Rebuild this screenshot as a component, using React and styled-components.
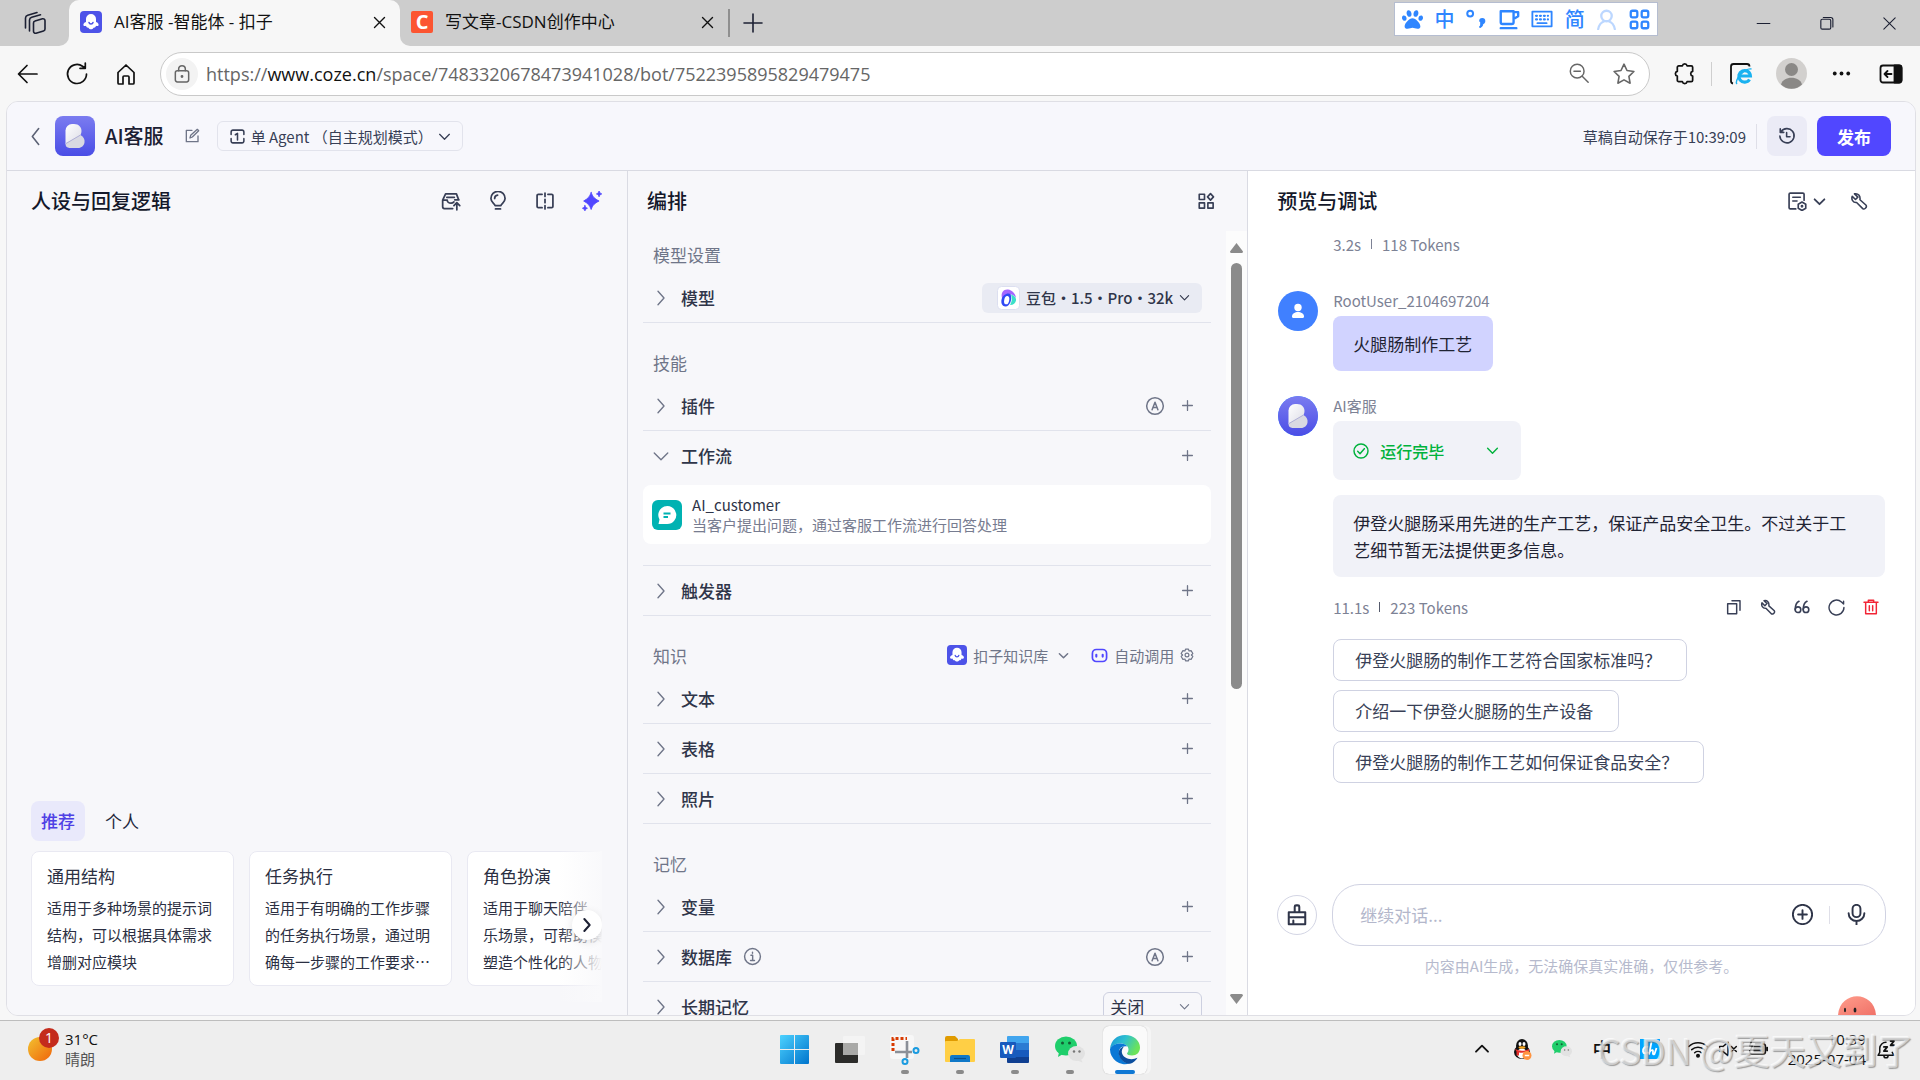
import styled, { createGlobalStyle } from "styled-components";
import { FaPaw } from "react-icons/fa";

const GlobalStyle = createGlobalStyle`
    * {
        box-sizing: border-box;
    }
    body {
        margin: 0;
        font-family: "Noto Sans CJK SC", "Noto Sans", sans-serif;
        color: #1c2033;
        background-color: #f7f7f7;
    }
    button, input, select {
        font-family: inherit;
        font-size: inherit;
        padding: 0;
        border: none;
        background: none;
        color: inherit;
    }
    button {
        cursor: pointer;
        display: flex;
        align-items: center;
        justify-content: center;
    }
    h1, h2, h3, p {
        margin: 0;
    }
    svg {
        display: block;
        flex: none;
    }
`;

/* ---------- icons ---------- */

const shapes = {
    back: <path d="M21 12H3M11 3.500L2.500 12l8.500 8.500" />,
    reload: <path d="M21.500 12a9.500 9.500 0 1 1-4-7.750L20 6M20.300 1v5.300H15" />,
    home: <path d="M4 10.500L12 3l8 7.500V21a1 1 0 0 1-1 1h-4v-7a1 1 0 0 0-1-1h-4a1 1 0 0 0-1 1v7H5a1 1 0 0 1-1-1z" />,
    lock: <><rect x="4" y="8" width="16" height="13.500" rx="2.500" /><path d="M8 8V6a4 4 0 0 1 8 0v2" /><circle cx="12" cy="15" r=".8" fill="currentColor" /></>,
    zoomOut: <><circle cx="10" cy="10" r="7.500" /><path d="M15.500 15.500L22 22M6.500 10h7" /></>,
    star: <path d="M12 2.200l3 6.300 6.900 1-5 4.800 1.200 6.900-6.100-3.300-6.100 3.300 1.200-6.900-5-4.800 6.900-1z" />,
    puzzle: <path d="M6 4h3.800a2.500 2.500 0 0 1 4.900 0H19a1.500 1.500 0 0 1 1.500 1.500v4.300a2.500 2.500 0 0 0 0 4.900V19a1.500 1.500 0 0 1-1.500 1.500h-4.300a2.500 2.500 0 0 1-4.900 0H6A1.500 1.500 0 0 1 4.500 19v-4.300a2.500 2.500 0 0 1 0-4.900V5.500A1.500 1.500 0 0 1 6 4z" />,
    close: <path d="M4 4l16 16M20 4L4 20" />,
    minus: <path d="M3 12h18" />,
    restore: <><rect x="4" y="6" width="14" height="14" rx="2" /><path d="M7.500 3.500H18a3 3 0 0 1 3 3V17" /></>,
    plus: <path d="M12 3v18M3 12h18" />,
    windows: <><path d="M10.500 12a2 2 0 0 1 1.500-2l7.500-2.200a2 2 0 0 1 2.500 2V18a2 2 0 0 1-1.500 2L13 22.200a2 2 0 0 1-2.500-2z" /><path d="M6.500 20V9a3 3 0 0 1 2.200-2.800L17.500 3.700M2.500 17V7a3 3 0 0 1 2.200-2.800L14 1.500" /></>,
    left: <path d="M16 2L8 12l8 10" />,
    right: <path d="M8 3l8 9-8 9" />,
    down: <path d="M3 8l9 9 9-9" />,
    up: <path d="M3 16l9-9 9 9" />,
    edit: <path d="M21 12v8.500H3.500V3.500H12M9 15l1-4L20 2l2 2-9.500 9.500z" />,
    agent: <path d="M9 3H5.500A2.500 2.500 0 0 0 3 5.500V9M3 15v3.500A2.500 2.500 0 0 0 5.500 21h13a2.500 2.500 0 0 0 2.500-2.500V15M15 3h3.500A2.500 2.500 0 0 1 21 5.500V9M9 9.500l3-2V17M9 3h6" />,
    history: <path d="M4 6.500A9.500 9.500 0 1 1 2.500 12M3 2.500v4.700h4.700M11.500 7.500V13H16" />,
    library: <path d="M21 10L18.500 3.500h-13L2 11v8a2 2 0 0 0 2 2h10M2 11h5.500c0 2 2 3.500 4.500 3.500M21.500 10.500h-5M7 7.500h9M12 14.500c1.500 0 2.500-.4 3.500-1.500M19 22.500V14M15.500 17.500L19 14l3.500 3.500" />,
    bulb: <path d="M8.500 17.500C8 15 3.500 13.500 3.500 9a8.500 8.500 0 0 1 17 0c0 4.500-4.500 6-5 8.500zM9 21.500h6M8 9a4 4 0 0 1 3.500-4" />,
    split: <path d="M8.500 4H4a1.500 1.500 0 0 0-1.500 1.500v13A1.500 1.500 0 0 0 4 20h4.500M15.500 4H20a1.500 1.500 0 0 1 1.500 1.500v13A1.500 1.500 0 0 1 20 20h-4.500M12 2.500v4M12 10v4M12 17.500v4" />,
    sparkle: <path d="M11 1.800c1.800 5.200 3.800 7.200 9.500 10.200-5.700 3-7.700 5-9.500 10.200-1.800-5.200-3.800-7.200-9-10.200 5.200-3 7.200-5 9-10.200zM20.500 0c.6 2 1.200 2.700 3.200 3.500-2 .8-2.600 1.500-3.200 3.500-.6-2-1.200-2.700-3.200-3.500 2-.8 2.600-1.500 3.200-3.500zM3.500 17.500c.6 1.800 1.200 2.500 3 3.200-1.800.7-2.400 1.300-3 3.100-.6-1.800-1.200-2.400-3-3.100 1.800-.7 2.400-1.400 3-3.200z" fill="currentColor" strokeWidth="1" />,
    blocks: <><rect x="3" y="3" width="7" height="7" /><rect x="3" y="14.500" width="7" height="7" /><rect x="14.500" y="14.500" width="7" height="7" /><path d="M18 2.200l4 4.300-4 4.300-4-4.300z" /></>,
    note: <><path d="M10.500 21.500H4A1.500 1.500 0 0 1 2.500 20V4A1.500 1.500 0 0 1 4 2.500h15A1.500 1.500 0 0 1 20.500 4v7M7 7.500h9M7 12h5" /><path d="M18 13.200l4.500 2.600v5L18 23.400l-4.500-2.600v-5z" /><circle cx="18" cy="18.300" r=".7" fill="currentColor" /></>,
    wrench: <path d="M6 2.500l4.500 4.300-3.200 3.200L3 5.800c-1.500 3.700.8 8.700 5.800 8.200l8.200 8.200c2 1.500 6-1.500 4.500-4.500l-8.200-7.400C14 5 11 1.500 6 2.500z" />,
    circleA: <><circle cx="12" cy="12" r="10" /><path d="M8.500 16.500L12 7.500l3.500 9M9.700 13.800h4.600" /></>,
    info: <><circle cx="12" cy="12" r="10" /><path d="M10 10.500h2.200V17M9.500 17h5M12 6.600v1.200" /></>,
    robot: <><rect x="2" y="3.500" width="20" height="17" rx="5.500" /><path d="M7.500 11v2.500M16.500 11v2.500" strokeWidth="3" /></>,
    gear: <><path d="M9.500 2h5l1 3.200L19 4.500l3 5L19.500 12l2.500 2.500-3 5-3.500-.7-1 3.200h-5l-1-3.200-3.500.7-3-5L4.500 12 2 9.500l3-5 3.500.7z" /><circle cx="12" cy="12" r="3.300" /></>,
    check: <><circle cx="12" cy="12" r="10.500" /><path d="M7 12.500l3.500 3.500L17 8.500" /></>,
    copy: <><rect x="2.500" y="7" width="13.500" height="15" /><path d="M9 2.500h12V17" /></>,
    quote: <><circle cx="6" cy="16" r="4.200" /><circle cx="18" cy="16" r="4.200" /><path d="M7.500 3.500C3.500 5.500 1.800 9 1.800 16M19.500 3.500c-4 2-5.700 5.500-5.700 12.500" /></>,
    redo: <path d="M22.500 12A10.500 10.500 0 1 1 19 4.200L22 7M22 3v4" />,
    trash: <path d="M1.500 5h21M8 4.500V2h8v2.500M4 5.500V22h16V5.500M9.500 10v7.500M14.500 10v7.500" />,
    broom: <path d="M9.500 9V3A1.500 1.500 0 0 1 11 1.500h2A1.500 1.500 0 0 1 14.500 3v6H21v13H3V9zM3 14.500h18M8 22v-4M9.500 9h5" />,
    addCircle: <><circle cx="12" cy="12" r="11" /><path d="M12 7v10M7 12h10" /></>,
    mic: <><rect x="7.500" y="1" width="9" height="14" rx="4.500" /><path d="M3 10.500a9 9 0 0 0 18 0M12 19.500v4" /></>,
    sidebar: <><rect x="1.500" y="3.500" width="21" height="17" rx="2.500" /><path d="M15.500 3.500H20a2.500 2.500 0 0 1 2.500 2.500v12a2.500 2.500 0 0 1-2.500 2.500h-4.500z" fill="currentColor" /><path d="M12.500 12H5.500M8.500 9l-3 3 3 3" /></>,
    dots: <g fill="currentColor" stroke="none"><circle cx="3.500" cy="12" r="2.400" /><circle cx="12" cy="12" r="2.400" /><circle cx="20.500" cy="12" r="2.400" /></g>,
    cup: <path d="M3 3.500h14v12a2 2 0 0 1-2 2H5a2 2 0 0 1-2-2zM17 4.500h5v4.500l-5 3M3 22h17" />,
    keyboard: <><rect x="1.500" y="4" width="21" height="16" /><path d="M5.500 8.500h13M5.500 12.500h13" strokeDasharray="1 3.300" strokeWidth="2.400" /><path d="M7 16.500h10" /></>,
    person: <><circle cx="12" cy="8" r="6" /><path d="M2.500 23c1-5 3.500-8 7-9M21.500 23c-1-5-3.500-8-7-9" /></>,
    apps: <><rect x="2" y="2" width="7.500" height="7.500" rx="2" /><rect x="14.500" y="2" width="7.500" height="7.500" rx="2" /><rect x="2" y="14.500" width="7.500" height="7.500" rx="2" /><rect x="14.500" y="14.500" width="7.500" height="7.500" rx="2" /></>,
    punct: <><circle cx="5" cy="5.500" r="3.500" /><path d="M17 14.500a2.500 2.500 0 1 1 2.500 2.500c.5 2-1 3.500-2.500 4.500" fill="currentColor" /></>,
    wifi: <><path d="M1 9a16 16 0 0 1 22 0M4.500 12.800a11 11 0 0 1 15 0M8 16.500a6 6 0 0 1 8 0" /><circle cx="12" cy="20" r="1.500" fill="currentColor" /></>,
    mute: <path d="M2 9v6h4l6 5V4L6 9zM16 9l6 6M22 9l-6 6" />,
    battery: <><path d="M9 6h9a3 3 0 0 1 3 3v6a3 3 0 0 1-3 3H5a3 3 0 0 1-3-3v-1M4.500 2L2 8h3.500L3.500 12" /><rect x="7.500" y="9" width="10" height="6" fill="currentColor" /><path d="M23 10.500v3" strokeWidth="2.500" /></>,
    bell: <><path d="M12 4A7.500 7.500 0 0 0 4.500 11v5L2.500 19.500h19L19.500 16M9.500 20a2.500 2.500 0 0 0 5 0" /><path d="M9.500 9.500h4l-4 5h4M17.500 2.500h4l-4 5h4" strokeWidth="2.200" /></>,
};

const Icon = ({ name, size = 20, weight = 2, color }) => (
    <svg
        width={size}
        height={size}
        viewBox="0 0 24 24"
        fill="none"
        stroke="currentColor"
        strokeWidth={weight}
        strokeLinecap="round"
        strokeLinejoin="round"
        color={color}
        aria-hidden="true"
    >
        {shapes[name]}
    </svg>
);

const CozeLogo = ({ size = 22 }) => (
    <svg width={size} height={size} viewBox="0 0 22 22">
        <rect width="22" height="22" rx="4" fill="#4d53e8" />
        <path d="M11 3a5 5 0 0 1 5 5v3c2 .5 3 2 2.500 3.500-.8.800-1.800.5-2.500.3-.5 1.700-1.500 2.200-2.500 1.900-1 2-4 2-5 0-1 .3-2-.2-2.500-1.900-.7.200-1.700.5-2.500-.3C3 13 4 11.500 6 11V8a5 5 0 0 1 5-5z" fill="#fff" />
        <path d="M9 11.500c.5 2 3.500 2 4 0" fill="none" stroke="#4d53e8" strokeWidth="1.500" strokeLinecap="round" />
    </svg>
);

const BotLogo = ({ round }) => (
    <svg width="40" height="40" viewBox="0 0 40 40">
        <defs>
            <linearGradient id="botBg" x1="0" y1="0" x2="0" y2="1">
                <stop offset="0" stopColor="#7b7cf0" />
                <stop offset="1" stopColor="#4a4de6" />
            </linearGradient>
            <linearGradient id="botFace" x1="0" y1="0" x2="1" y2="1">
                <stop offset="0" stopColor="#fff" />
                <stop offset="1" stopColor="#dcdce6" />
            </linearGradient>
        </defs>
        <rect width="40" height="40" rx={round ? 20 : 8} fill="url(#botBg)" />
        <path d="M10.500 28V14.500a6.500 6.500 0 0 1 6.500-6.500h2c5 0 7.500 3.500 7.500 7 0 2.500-1 4-3 5.500z" fill="url(#botFace)" />
        <path d="M10.500 27.500L25.500 19c3 1.500 4.500 4.500 4 7.500-.5 3-3 5.500-6.500 5.500h-8.500a4.300 4.300 0 0 1-4-4.500z" fill="#d9d9e2" />
        <path d="M11 27.500L25 19.300" stroke="#b0b0d6" strokeWidth="1" />
    </svg>
);

const IeLogo = () => (
    <svg width="24" height="24" viewBox="0 0 24 24" fill="none">
        <path d="M4 21.500A2.500 2.500 0 0 1 2 19V4.500a2.500 2.500 0 0 1 2.500-2.500H18a2.500 2.500 0 0 1 2.500 2.500" stroke="#111" strokeWidth="1.800" />
        <path d="M20.500 17.500a5.800 5.800 0 1 1 .9-3.500H10.500" stroke="#1ab2f0" strokeWidth="3.200" />
        <path d="M8 22C5 19 15.500 5.500 22.500 7" stroke="#1ab2f0" strokeWidth="1.400" />
    </svg>
);

const UserAvatar = () => (
    <svg width="31" height="31" viewBox="0 0 31 31">
        <circle cx="15.500" cy="15.500" r="15.500" fill="#d2d0ce" />
        <circle cx="15.500" cy="11.500" r="6.500" fill="#8a8886" />
        <path d="M5 26.500c2-9 19-9 21 0a15 15 0 0 1-21 0z" fill="#8a8886" />
    </svg>
);

const WeChatLogo = ({ size = 30 }) => (
    <svg width={size} height={size} viewBox="0 0 30 30">
        <ellipse cx="11" cy="11" rx="11" ry="9.500" fill="#1fce6b" />
        <path d="M4 17l-1 5 5-3z" fill="#1fce6b" />
        <ellipse cx="21.500" cy="18.500" rx="8.500" ry="7.500" fill="#e2e2e2" />
        <path d="M26 24l1.500 3.500-5-2z" fill="#e2e2e2" />
        <circle cx="7.500" cy="8" r="1.500" fill="#155c34" />
        <circle cx="14.500" cy="8" r="1.500" fill="#155c34" />
        <circle cx="19" cy="16.500" r="1.200" fill="#777" />
        <circle cx="24.500" cy="16.500" r="1.200" fill="#777" />
    </svg>
);

/* ---------- browser chrome ---------- */

const Screen = styled.div`
    height: 100vh;
    min-width: 1280px;
    display: flex;
    flex-direction: column;
    overflow: hidden;
    position: relative;
`;

const TabBar = styled.div`
    height: 46px;
    flex: none;
    display: flex;
    align-items: center;
    background-color: #cdcdcd;
    position: relative;
`;

const TabActions = styled.button`
    width: 69px;
    height: 46px;
    background-color: #cdcdcd;
    border-bottom-right-radius: 10px;
`;

const TabCorner = styled.div`
    align-self: stretch;
    background-color: #f7f7f7;
`;

const Tab = styled.div`
    width: ${(props) => (props.$active ? "331px" : "328px")};
    height: 46px;
    padding: 0 13px 2px 11px;
    display: flex;
    align-items: center;
    gap: 12px;
    background-color: ${(props) => (props.$active ? "#f7f7f7" : "#cdcdcd")};
    border-radius: ${(props) => (props.$active ? "10px 10px 0 0" : "0 0 0 10px")};
    font: 17px/24px "Open Sans", "Noto Sans CJK SC", sans-serif;
    color: #111;
`;

const TabTitle = styled.span`
    flex: 1;
    white-space: nowrap;
`;

const CsdnLogo = styled.span`
    width: 22px;
    height: 22px;
    border-radius: 2px;
    background-color: #fc5531;
    color: white;
    font: bold 20px/22px "Open Sans", sans-serif;
    text-align: center;
`;

const NewTab = styled.button`
    height: 28px;
    width: 48px;
    border-left: 2px solid #8f8f8f;
`;

const WindowControls = styled.div`
    margin-left: auto;
    display: flex;
    gap: 46px;
    padding-right: 22px;
`;

const ImeBar = styled.div`
    position: absolute;
    top: 2px;
    right: 262px;
    width: 264px;
    height: 34px;
    padding: 0 7px;
    display: flex;
    align-items: center;
    justify-content: space-between;
    background-color: white;
    border: 1px solid #b5bdd0;
    color: #2f86ff;
    font-size: 20px;
    font-weight: 500;
    line-height: 30px;
`;

const AddressRow = styled.div`
    height: 55px;
    flex: none;
    display: flex;
    align-items: center;
    padding: 0 4px 0 16px;
    background-color: #f7f7f7;
    color: #111;
`;

const NavButtons = styled.div`
    display: flex;
    gap: 25px;
    padding-right: 22px;
`;

const AddressField = styled.div`
    flex: 1;
    height: 44px;
    padding: 0 13px 0 5px;
    display: flex;
    align-items: center;
    background-color: white;
    border: 1px solid #c9c9c9;
    border-radius: 22px;
    color: #666;
`;

const LockBadge = styled.span`
    width: 32px;
    height: 32px;
    display: flex;
    align-items: center;
    justify-content: center;
    border-radius: 50%;
    background-color: #f3f3f3;
`;

const Url = styled.a`
    flex: 1;
    margin-left: 8px;
    font: 18px/24px "Open Sans", sans-serif;
    color: #666;
    text-decoration: none;
    b {
        color: #111;
        font-weight: 400;
    }
`;

const FieldIcons = styled.div`
    display: flex;
    gap: 22px;
`;

const BrowserTools = styled.div`
    display: flex;
    align-items: center;
    padding-left: 23px;
`;

const ToolCell = styled.button`
    width: 50px;
    height: 40px;
`;

const Extensions = styled.div`
    display: flex;
    align-items: center;
    gap: 15px;
    padding-right: 4px;
`;

const Rule = styled.span`
    width: 1px;
    height: ${(props) => props.$height || 24}px;
    background-color: ${(props) => props.$color || "#dfdfe8"};
`;

/* ---------- app shell ---------- */

const AppFrame = styled.main`
    flex: 1;
    min-height: 0;
    margin: 0 4px 4px 6px;
    display: flex;
    flex-direction: column;
    border: 1px solid #dfdfe5;
    border-radius: 12px;
    overflow: hidden;
    background-color: #f7f7fa;
`;

const AppHeader = styled.header`
    height: 69px;
    flex: none;
    display: flex;
    align-items: center;
    padding: 0 24px 0 19px;
    background-color: #f7f7fc;
    border-bottom: 1px solid #d9dae2;
    color: #383f56;
`;

const BackButton = styled.button`
    margin-right: 10px;
`;

const BotName = styled.h1`
    margin: 0 20px 0 10px;
    font-size: 20px;
    line-height: 28px;
    font-weight: 500;
    color: #1c2033;
`;

const ModeButton = styled.button`
    height: 30px;
    margin-left: 17px;
    padding: 0 11px;
    gap: 5px;
    border: 1px solid #e2e3ec;
    border-radius: 6px;
    font-size: 15px;
`;

const HeaderRight = styled.div`
    margin-left: auto;
    display: flex;
    align-items: center;
    gap: 10px;
    font-size: 15px;
`;

const HistoryButton = styled.button`
    width: 40px;
    height: 40px;
    border-radius: 8px;
    background-color: #ebebf6;
`;

const PublishButton = styled.button`
    width: 74px;
    height: 40px;
    border-radius: 8px;
    background-color: #5147ff;
    color: white;
    font-size: 17px;
    font-weight: 700;
`;

const Workspace = styled.div`
    flex: 1;
    min-height: 0;
    display: grid;
    grid-template-columns: 13fr 13fr 14fr;
`;

const Panel = styled.section`
    min-width: 0;
    min-height: 0;
    display: flex;
    flex-direction: column;
    overflow: hidden;
    background-color: ${(props) => (props.$white ? "#fff" : "#f7f7fa")};
    border-left: ${(props) => (props.$first ? "none" : "1px solid #dadbe3")};
`;

const PanelHeader = styled.div`
    height: 60px;
    flex: none;
    display: flex;
    align-items: center;
    justify-content: space-between;
    padding: ${(props) => props.$pad};
    color: #383f56;
`;

const PanelTitle = styled.h2`
    font-size: 20px;
    line-height: 28px;
    font-weight: 500;
    color: #14182a;
`;

const IconGroup = styled.div`
    display: flex;
    align-items: center;
    gap: ${(props) => props.$gap}px;
`;

/* ---------- persona panel ---------- */

const PromptArea = styled.div`
    flex: 1;
`;

const TabPills = styled.div`
    display: flex;
    gap: 10px;
    padding-left: 24px;
`;

const Pill = styled.button`
    height: 40px;
    padding: 0 10px 2px;
    border-radius: 8px;
    font-size: 17px;
    background-color: ${(props) => (props.$active ? "#e9e9fb" : "transparent")};
    color: ${(props) => (props.$active ? "#4e40e5" : "#22263a")};
    font-weight: ${(props) => (props.$active ? 500 : 400)};
`;

const Carousel = styled.div`
    position: relative;
    margin: 10px 25px 13px 24px;
    padding-bottom: 16px;
    display: flex;
    gap: 15px;
    overflow: hidden;
`;

const PromptCard = styled.article`
    flex: none;
    width: 203px;
    height: 135px;
    padding: 11px 15px;
    background-color: white;
    border: 1px solid #e9e9f2;
    border-radius: 8px;
    color: #2b2f42;
`;

const CardTitle = styled.h3`
    font-size: 17px;
    line-height: 26px;
    font-weight: 400;
`;

const CardText = styled.p`
    margin-top: 5px;
    font-size: 15px;
    line-height: 27px;
`;

const Fade = styled.div`
    position: absolute;
    top: 0;
    right: 0;
    bottom: 0;
    width: 44px;
    background: linear-gradient(90deg, rgba(249, 249, 251, 0), #f9f9fb);
`;

const NextButton = styled.button`
    position: absolute;
    top: 59px;
    right: 0;
    width: 30px;
    height: 30px;
    border-radius: 50%;
    background-color: white;
    box-shadow: 0 2px 8px rgba(0, 0, 0, 0.1);
`;

/* ---------- arrange panel ---------- */

const ScrollRow = styled.div`
    flex: 1;
    min-height: 0;
    display: flex;
`;

const Settings = styled.div`
    flex: 1;
    min-width: 0;
    margin-top: -16px;
    padding: 0 15px;
    overflow: hidden;
`;

const SectionHeader = styled.div`
    height: 58px;
    padding: 20px 17px 0 10px;
    display: flex;
    align-items: center;
    justify-content: space-between;
    font-size: 17px;
    color: #6f7588;
`;

const KnowledgeTools = styled.div`
    display: flex;
    align-items: center;
    gap: 22px;
    font-size: 15px;
`;

const Tool = styled.button`
    gap: 6px;
`;

const ToolArrow = styled.span`
    padding-left: 4px;
`;

const SettingRow = styled.div`
    height: 50px;
    padding: 0 ${(props) => (props.$wide ? 9 : 17)}px 0 9px;
    display: flex;
    align-items: center;
    gap: 11px;
    border-bottom: 1px solid ${(props) => (props.$open ? "transparent" : "#e1e3ec")};
    font-size: 17px;
    line-height: 26px;
    font-weight: 500;
    color: #2f3549;
`;

const RowActions = styled.div`
    margin-left: auto;
    display: flex;
    align-items: center;
    gap: ${(props) => props.$gap || 16}px;
    color: #6f7588;
`;

const ModelButton = styled.button`
    height: 30px;
    padding: 0 12px 0 15px;
    gap: 6px;
    border-radius: 6px;
    background-color: #e9ebf3;
    color: #2f3549;
    font-size: 15px;
    font-weight: 500;
`;

const WorkflowList = styled.div`
    padding: 4px 0 21px;
    border-bottom: 1px solid #e1e3ec;
`;

const WorkflowCard = styled.div`
    height: 59px;
    padding: 0 9px;
    display: flex;
    align-items: center;
    gap: 10px;
    background-color: white;
    border-radius: 8px;
    font-size: 15px;
    line-height: 20px;
    color: #2f3549;
    p + p {
        color: #777c90;
    }
`;

const SelectBox = styled.label`
    width: 99px;
    height: 30px;
    padding: 0 11px 0 6px;
    display: flex;
    align-items: center;
    justify-content: space-between;
    border: 1px solid #cdd0e0;
    border-radius: 6px;
    select {
        flex: 1;
        appearance: none;
        font-size: 17px;
        color: #2f3549;
        outline: none;
    }
`;

const ScrollTrack = styled.div`
    width: 21px;
    padding: 12px 0 11px;
    display: flex;
    flex-direction: column;
    align-items: center;
    background-color: #fcfcfc;
`;

const ScrollThumb = styled.div`
    flex: none;
    width: 11px;
    height: 56%;
    margin: 10px 0 auto;
    border-radius: 6px;
    background-color: #8b8b8b;
`;

/* ---------- preview panel ---------- */

const Chat = styled.div`
    flex: 1;
    min-height: 0;
    padding: 1px 30px 0;
`;

const Message = styled.div`
    display: flex;
    gap: 15px;
    margin-bottom: 25px;
`;

const Avatar = styled.div`
    flex: none;
    width: 40px;
    height: 40px;
    border-radius: 50%;
    background-color: #4080ff;
    overflow: hidden;
`;

const MessageBody = styled.div`
    flex: 1;
    min-width: 0;
`;

const Sender = styled.div`
    height: 25px;
    font-size: 15px;
    line-height: 20px;
    color: #7d8295;
`;

const Bubble = styled.div`
    width: fit-content;
    padding: 14px ${(props) => (props.$user ? 21 : 30)}px 14px 20px;
    border-radius: 8px;
    background-color: ${(props) => (props.$user ? "#d1d3ff" : "#f1f2f8")};
    font-size: 17px;
    line-height: 27px;
    color: #1f2333;
`;

const RunStatus = styled.button`
    width: 188px;
    height: 59px;
    margin-bottom: 15px;
    padding: 0 22px 0 20px;
    gap: 11px;
    border-radius: 8px;
    background-color: #f1f2f8;
    color: #00b23c;
    font-size: 16px;
    font-weight: 500;
    span {
        flex: 1;
        text-align: left;
    }
`;

const Meta = styled.div`
    display: flex;
    align-items: center;
    gap: 10px;
    height: 24px;
    font-size: 15px;
    color: #7d8295;
`;

const MetaTop = styled(Meta)`
    margin: 0 0 35px 55px;
`;

const MetaBottom = styled(Meta)`
    margin: 18px 6px 20px 0;
`;

const Suggestions = styled.div`
    display: flex;
    flex-direction: column;
    align-items: flex-start;
    gap: 9px;
`;

const Suggestion = styled.button`
    height: 42px;
    padding: 0 25px 2px 21px;
    border: 1px solid #cfd2e2;
    border-radius: 8px;
    background-color: white;
    font-size: 17px;
    color: #383f56;
`;

const Composer = styled.form`
    display: flex;
    align-items: center;
    gap: 15px;
    padding: 0 29px;
`;

const ClearButton = styled.button`
    width: 40px;
    height: 40px;
    border: 1px solid #d3d5e4;
    border-radius: 50%;
    color: #2f3549;
`;

const InputPill = styled.div`
    flex: 1;
    height: 62px;
    padding: 0 18px 1px 27px;
    display: flex;
    align-items: center;
    gap: 16px;
    border: 1px solid #d0d2e2;
    border-radius: 28px;
    color: #2f3549;
    input {
        flex: 1;
        font-size: 17px;
        outline: none;
    }
    input::placeholder {
        color: #b3b7cb;
    }
`;

const Disclaimer = styled.p`
    height: 69px;
    padding-top: 8px;
    text-align: center;
    font-size: 15px;
    line-height: 24px;
    color: #b6bacd;
    position: relative;
`;

const Mascot = styled.div`
    position: absolute;
    right: 39px;
    bottom: 0;
`;

/* ---------- taskbar ---------- */

const Taskbar = styled.footer`
    height: 60px;
    flex: none;
    display: grid;
    grid-template-columns: 1fr auto 1fr;
    align-items: center;
    padding: 0 24px 3px 28px;
    border-top: 1px solid #bdbdbd;
    background-color: #eeeeee;
    font: 15px/20px "Open Sans", "Noto Sans CJK SC", sans-serif;
    color: #111;
`;

const Weather = styled.div`
    display: flex;
    align-items: center;
    gap: 13px;
    position: relative;
`;

const WeatherText = styled.div`
    span {
        display: block;
        color: #555;
    }
`;

const Badge = styled.span`
    position: absolute;
    left: 11px;
    top: -1px;
    width: 20px;
    height: 20px;
    border-radius: 50%;
    background-color: #c42b1c;
    color: white;
    font-size: 14px;
    text-align: center;
`;

const Dock = styled.nav`
    display: flex;
    gap: 11px;
    padding: 2px 4px 0 0;
`;

const DockItem = styled.button`
    width: 44px;
    height: 48px;
    flex-direction: column;
    justify-content: space-between;
    padding: 9px 0 0;
    border-radius: 6px;
    background-color: ${(props) => (props.$active ? "#fafafa" : "transparent")};
    box-shadow: ${(props) => (props.$active ? "0 0 1px #aaa, 4px 0 0 #f5f5f5" : "none")};
`;

const RunMark = styled.span`
    width: ${(props) => (props.$active ? 20 : 8)}px;
    height: 4px;
    border-radius: 2px;
    background-color: ${(props) => (props.$active ? "#0f78d4" : "#8a8a8a")};
    visibility: ${(props) => (props.$hidden ? "hidden" : "visible")};
`;

const Tray = styled.div`
    display: flex;
    align-items: center;
    justify-content: flex-end;
    gap: 10px;
`;

const TrayApps = styled.div`
    display: flex;
    align-items: center;
`;

const TrayItem = styled.button`
    width: ${(props) => (props.$wide ? 56 : 40)}px;
    height: 40px;
    font-size: 19px;
    font-weight: 500;
`;

const Clock = styled.div`
    width: 88px;
    text-align: right;
`;

const Watermark = styled.div`
    position: absolute;
    right: 6px;
    bottom: 3px;
    pointer-events: none;
    white-space: nowrap;
    font-size: 36px;
    line-height: 56px;
    color: rgba(236, 236, 236, 0.6);
    text-shadow: 1px 1px 1px rgba(90, 90, 90, 0.55), -1px -1px 0 rgba(255, 255, 255, 0.7);
`;

const cards = [
    { title: "通用结构", text: "适用于多种场景的提示词结构，可以根据具体需求增删对应模块" },
    { title: "任务执行", text: "适用于有明确的工作步骤的任务执行场景，通过明确每一步骤的工作要求⋯" },
    { title: "角色扮演", text: "适用于聊天陪伴、互动娱乐场景，可帮助模型轻松塑造个性化的人物" },
];

const suggestions = [
    "伊登火腿肠的制作工艺符合国家标准吗？",
    "介绍一下伊登火腿肠的生产设备",
    "伊登火腿肠的制作工艺如何保证食品安全？",
];

const Row = ({ title, open, auto, info, wide, children }) => (
    <SettingRow $open={open} $wide={wide}>
        <Icon name={open ? "down" : "right"} size={18} weight={1.8} color="#6f7588" />
        {title}
        {info && <Icon name="info" size={19} weight={1.8} color="#6f7588" />}
        <RowActions>
            {children || (
                <>
                    {auto && <Icon name="circleA" size={20} weight={1.8} />}
                    <button aria-label={`添加${title}`}><Icon name="plus" size={13} weight={2.4} /></button>
                </>
            )}
        </RowActions>
    </SettingRow>
);

const Browser = () => (
    <>
        <TabBar>
            <TabCorner>
                <TabActions aria-label="工作区"><Icon name="windows" size={24} weight={1.6} /></TabActions>
            </TabCorner>
            <Tab $active>
                <CozeLogo />
                <TabTitle>AI客服 -智能体 - 扣子</TabTitle>
                <button aria-label="关闭标签页"><Icon name="close" size={15} weight={2.2} /></button>
            </Tab>
            <TabCorner>
                <Tab>
                    <CsdnLogo>C</CsdnLogo>
                    <TabTitle>写文章-CSDN创作中心</TabTitle>
                    <button aria-label="关闭标签页"><Icon name="close" size={15} weight={2.2} /></button>
                </Tab>
            </TabCorner>
            <NewTab aria-label="新建标签页"><Icon name="plus" size={24} weight={1.6} /></NewTab>
            <WindowControls>
                <button aria-label="最小化"><Icon name="minus" size={17} weight={1.5} /></button>
                <button aria-label="还原"><Icon name="restore" size={17} weight={1.6} /></button>
                <button aria-label="关闭"><Icon name="close" size={17} weight={1.5} /></button>
            </WindowControls>
            <ImeBar>
                <FaPaw size={21} />
                <span>中</span>
                <Icon name="punct" size={20} weight={2.4} />
                <Icon name="cup" size={22} weight={2.6} />
                <Icon name="keyboard" size={22} weight={2} />
                <span>简</span>
                <Icon name="person" size={21} weight={2.6} color="#bcd7ff" />
                <Icon name="apps" size={21} weight={2.6} />
            </ImeBar>
        </TabBar>
        <AddressRow>
            <NavButtons>
                <button aria-label="后退"><Icon name="back" size={24} weight={1.7} /></button>
                <button aria-label="刷新"><Icon name="reload" size={24} weight={1.7} /></button>
                <button aria-label="主页"><Icon name="home" size={24} weight={1.7} /></button>
            </NavButtons>
            <AddressField>
                <LockBadge><Icon name="lock" size={20} weight={1.8} /></LockBadge>
                <Url href="#">https://<b>www.coze.cn</b>/space/7483320678473941028/bot/7522395895829479475</Url>
                <FieldIcons>
                    <Icon name="zoomOut" size={22} weight={1.6} />
                    <Icon name="star" size={24} weight={1.6} />
                </FieldIcons>
            </AddressField>
            <BrowserTools>
                <Extensions>
                    <Icon name="puzzle" size={23} weight={1.8} />
                    <Rule $color="#cfcfcf" />
                </Extensions>
                <ToolCell aria-label="IE 模式"><IeLogo /></ToolCell>
                <ToolCell aria-label="个人资料"><UserAvatar /></ToolCell>
                <ToolCell aria-label="更多"><Icon name="dots" size={19} /></ToolCell>
                <ToolCell aria-label="侧栏"><Icon name="sidebar" size={24} weight={1.8} /></ToolCell>
            </BrowserTools>
        </AddressRow>
    </>
);

const Header = () => (
    <AppHeader>
        <BackButton aria-label="返回"><Icon name="left" size={19} weight={2} color="#5c6275" /></BackButton>
        <BotLogo />
        <BotName>AI客服</BotName>
        <button aria-label="编辑"><Icon name="edit" size={16} weight={2} color="#6f7588" /></button>
        <ModeButton>
            <Icon name="agent" size={17} weight={2.2} />
            单 Agent （自主规划模式）
            <Icon name="down" size={13} weight={2.4} />
        </ModeButton>
        <HeaderRight>
            草稿自动保存于10:39:09
            <Rule $height={25} />
            <HistoryButton aria-label="历史"><Icon name="history" size={18} weight={2.1} /></HistoryButton>
            <PublishButton>发布</PublishButton>
        </HeaderRight>
    </AppHeader>
);

const PersonaPanel = () => (
    <Panel $first>
        <PanelHeader $pad="0 25px 0 24px">
            <PanelTitle>人设与回复逻辑</PanelTitle>
            <IconGroup $gap={27}>
                <Icon name="library" size={20} weight={2.1} />
                <Icon name="bulb" size={20} weight={2.1} />
                <Icon name="split" size={20} weight={2.1} />
                <Icon name="sparkle" size={20} color="#5147ff" />
            </IconGroup>
        </PanelHeader>
        <PromptArea />
        <TabPills>
            <Pill $active>推荐</Pill>
            <Pill>个人</Pill>
        </TabPills>
        <Carousel>
            {cards.map((card) => (
                <PromptCard key={card.title}>
                    <CardTitle>{card.title}</CardTitle>
                    <CardText>{card.text}</CardText>
                </PromptCard>
            ))}
            <Fade />
            <NextButton aria-label="下一页"><Icon name="right" size={16} weight={3} /></NextButton>
        </Carousel>
    </Panel>
);

const DoubaoLogo = () => (
    <svg width="23" height="24" viewBox="0 0 23 24">
        <rect x=".5" y=".5" width="22" height="23" rx="4" fill="#fff" stroke="#dcdff0" />
        <path d="M5 12C3.500 6 7 3 11 3.500c4 .5 7.500 4 8 8.500-2-3-5-4.500-8-3.500s-4 3.500-4 6z" fill="#a566ff" />
        <path d="M14 8.500c3.500 1 5.500 3.500 5 6s-2.500 4.500-6 4.500c2-3 2.500-7 1-10.500z" fill="#3be0c8" />
        <path d="M13.500 8c2 5-.5 12.500-5 12.500-4 0-5-4.500-3.500-8.500 1-2.500 5-6 8.500-4z" fill="#2f49f5" />
        <ellipse cx="9.700" cy="14.200" rx="2.500" ry="4.200" transform="rotate(12 9.700 14.200)" fill="#fff" />
    </svg>
);

const ArrangePanel = () => (
    <Panel>
        <PanelHeader $pad="0 32px 0 19px">
            <PanelTitle>编排</PanelTitle>
            <Icon name="blocks" size={18} weight={2.2} />
        </PanelHeader>
        <ScrollRow>
            <Settings>
                <SectionHeader>模型设置</SectionHeader>
                <Row title="模型" wide>
                    <ModelButton>
                        <DoubaoLogo />
                        豆包・1.5・Pro・32k
                        <Icon name="down" size={11} weight={2.4} />
                    </ModelButton>
                </Row>
                <SectionHeader>技能</SectionHeader>
                <Row title="插件" auto />
                <Row title="工作流" open />
                <WorkflowList>
                    <WorkflowCard>
                        <svg width="30" height="30" viewBox="0 0 30 30">
                            <rect width="30" height="30" rx="6" fill="#00b2b2" />
                            <path d="M6.500 24l1-4.500A9 9 0 1 1 15.300 24z" fill="#fff" />
                            <path d="M11.500 13.500h7M11.500 17h4.500" stroke="#00b2b2" strokeWidth="1.800" />
                        </svg>
                        <div>
                            <p>AI_customer</p>
                            <p>当客户提出问题，通过客服工作流进行回答处理</p>
                        </div>
                    </WorkflowCard>
                </WorkflowList>
                <Row title="触发器" />
                <SectionHeader>
                    知识
                    <KnowledgeTools>
                        <Tool>
                            <CozeLogo size={20} />
                            扣子知识库
                            <ToolArrow><Icon name="down" size={11} weight={3.2} /></ToolArrow>
                        </Tool>
                        <Tool>
                            <Icon name="robot" size={17} weight={2.4} color="#5147ff" />
                            自动调用
                            <Icon name="gear" size={14} weight={2} />
                        </Tool>
                    </KnowledgeTools>
                </SectionHeader>
                <Row title="文本" />
                <Row title="表格" />
                <Row title="照片" />
                <SectionHeader>记忆</SectionHeader>
                <Row title="变量" />
                <Row title="数据库" info auto />
                <Row title="长期记忆" wide>
                    <SelectBox>
                        <select aria-label="长期记忆" defaultValue="off">
                            <option value="off">关闭</option>
                            <option value="on">开启</option>
                        </select>
                        <Icon name="down" size={11} weight={2.4} />
                    </SelectBox>
                </Row>
            </Settings>
            <ScrollTrack>
                <svg width="13" height="10" viewBox="0 0 13 10"><path d="M6.500 0L13 8.500q0 1.500-1.500 1.500h-10Q0 10 0 8.500z" fill="#8b8b8b" /></svg>
                <ScrollThumb />
                <svg width="13" height="10" viewBox="0 0 13 10"><path d="M6.500 10L13 1.500Q13 0 11.500 0h-10Q0 0 0 1.500z" fill="#8b8b8b" /></svg>
            </ScrollTrack>
        </ScrollRow>
    </Panel>
);

const PreviewPanel = () => (
    <Panel $white>
        <PanelHeader $pad="0 47px 0 29px">
            <PanelTitle>预览与调试</PanelTitle>
            <IconGroup $gap={24}>
                <IconGroup $gap={6}>
                    <Icon name="note" size={20} weight={2} />
                    <Icon name="down" size={13} weight={3.4} />
                </IconGroup>
                <Icon name="wrench" size={18} weight={2.1} />
            </IconGroup>
        </PanelHeader>
        <Chat>
            <MetaTop>
                3.2s <Rule $height={10} $color="#7d8295" /> 118 Tokens
            </MetaTop>
            <Message>
                <Avatar>
                    <svg width="40" height="40" viewBox="0 0 40 40" fill="#fff">
                        <circle cx="20" cy="16.500" r="3.700" />
                        <path d="M14 25.500c0-6 12-6 12 0q0 1.500-1.500 1.500h-9q-1.500 0-1.500-1.500z" />
                    </svg>
                </Avatar>
                <MessageBody>
                    <Sender>RootUser_2104697204</Sender>
                    <Bubble $user>火腿肠制作工艺</Bubble>
                </MessageBody>
            </Message>
            <Message>
                <Avatar><BotLogo round /></Avatar>
                <MessageBody>
                    <Sender>AI客服</Sender>
                    <RunStatus>
                        <Icon name="check" size={16} weight={2.2} />
                        <span>运行完毕</span>
                        <Icon name="down" size={13} weight={2.6} />
                    </RunStatus>
                    <Bubble>伊登火腿肠采用先进的生产工艺，保证产品安全卫生。不过关于工艺细节暂无法提供更多信息。</Bubble>
                    <MetaBottom>
                        11.1s <Rule $height={10} $color="#555a6c" /> 223 Tokens
                        <RowActions $gap={18}>
                            <Icon name="copy" size={16} weight={2.2} color="#383f56" />
                            <Icon name="wrench" size={16} weight={2.2} color="#383f56" />
                            <Icon name="quote" size={16} weight={2.4} color="#383f56" />
                            <Icon name="redo" size={17} weight={2} color="#383f56" />
                            <Icon name="trash" size={16} weight={2.2} color="#f22435" />
                        </RowActions>
                    </MetaBottom>
                    <Suggestions>
                        {suggestions.map((text) => (
                            <Suggestion key={text}>{text}</Suggestion>
                        ))}
                    </Suggestions>
                </MessageBody>
            </Message>
        </Chat>
        <Composer>
            <ClearButton type="button" aria-label="清除对话"><Icon name="broom" size={22} weight={2.2} /></ClearButton>
            <InputPill>
                <input aria-label="继续对话" placeholder="继续对话..." />
                <button type="button" aria-label="添加"><Icon name="addCircle" size={21} weight={2.2} /></button>
                <Rule $height={18} />
                <button type="button" aria-label="语音"><Icon name="mic" size={21} weight={2.2} /></button>
            </InputPill>
        </Composer>
        <Disclaimer>
            内容由AI生成，无法确保真实准确，仅供参考。
            <Mascot>
                <svg width="38" height="19" viewBox="0 0 38 19">
                    <defs>
                        <linearGradient id="mascot" x1="0" y1="0" x2="1" y2="1">
                            <stop offset="0" stopColor="#ff9d8c" />
                            <stop offset="1" stopColor="#f07268" />
                        </linearGradient>
                    </defs>
                    <path d="M0 19C2-6 36-6 38 19z" fill="url(#mascot)" />
                    <ellipse cx="7" cy="14" rx="1" ry="2.300" fill="#222" />
                    <ellipse cx="17" cy="14" rx="1.400" ry="2.500" fill="#222" />
                </svg>
            </Mascot>
        </Disclaimer>
    </Panel>
);

const WindowsLogo = () => (
    <svg width="30" height="30" viewBox="0 0 30 30">
        <defs>
            <linearGradient id="win" x1="0" y1="0" x2="1" y2="1">
                <stop offset="0" stopColor="#4cd2ff" />
                <stop offset="1" stopColor="#0074cc" />
            </linearGradient>
        </defs>
        <path d="M0 1q0-1 1-1h13v14H0zM15 0h13q1 0 1 1v13H15zM0 15h14v14H1q-1 0-1-1zM15 15h14v13q0 1-1 1H15z" fill="url(#win)" />
    </svg>
);

const TaskViewLogo = () => (
    <svg width="30" height="30" viewBox="0 0 30 30">
        <rect y="8" width="23" height="20" rx="1" fill="#2c2c2a" />
        <rect x="8" y="1" width="22" height="19" rx="1" fill="#f5f5f5" fillOpacity=".8" />
        <rect x="8" y="8" width="15" height="12" fill="#a9a9a7" />
    </svg>
);

const SnipLogo = () => (
    <svg width="30" height="30" viewBox="0 0 30 30" fill="none">
        <rect width="24" height="24" rx="3" fill="#f7f7f7" />
        <path d="M3 16V3.500h14" stroke="#d83b01" strokeWidth="3" strokeDasharray="3 2" />
        <path d="M17 6v17M5 17h17" stroke="#8b9098" strokeWidth="2.600" />
        <circle cx="26" cy="15.500" r="2.500" stroke="#1a9be0" strokeWidth="2" />
        <circle cx="15" cy="26.500" r="2.500" stroke="#1a9be0" strokeWidth="2" />
    </svg>
);

const FolderLogo = () => (
    <svg width="30" height="30" viewBox="0 0 30 30">
        <path d="M0 3q0-2 2-2h8l3 3v6H0z" fill="#e09b00" />
        <path d="M0 7q0-1 1-1h11l3-2h14q1 0 1 1v21q0 1-1 1H1q-1 0-1-1z" fill="#ffcf45" />
        <path d="M5 27v-5q0-2 2-2h16q2 0 2 2v5z" fill="#0f78c8" />
        <path d="M9 23.500h12" stroke="#0a4f8c" strokeWidth="1.200" />
    </svg>
);

const WordLogo = () => (
    <svg width="30" height="30" viewBox="0 0 30 30">
        <path d="M8 1h20q1 0 1 1v6H7V2q0-1 1-1z" fill="#41a5ee" />
        <path d="M7 8h22v7H7z" fill="#2b7cd3" />
        <path d="M7 15h22v7H7z" fill="#185abd" />
        <path d="M7 22h22v5q0 1-1 1H8q-1 0-1-1z" fill="#103f91" />
        <rect y="7" width="16" height="16" rx="1" fill="#185abd" />
        <text x="8" y="19" textAnchor="middle" fill="#fff" fontSize="12" fontWeight="700">W</text>
    </svg>
);

const EdgeLogo = () => (
    <svg width="30" height="30" viewBox="0 0 30 30">
        <defs>
            <linearGradient id="edgeTop" x1="0" y1="0" x2="1" y2=".4">
                <stop offset="0" stopColor="#1a93d8" />
                <stop offset=".5" stopColor="#2dc0d0" />
                <stop offset="1" stopColor="#6be35a" />
            </linearGradient>
        </defs>
        <path d="M0 14C1 5 7 0 15 0c9 0 15 6 15 12.500 0 5-3.500 8-8 8-3 0-5-1-5-2 0-.8 1.500-1.300 1.500-4 0-3.500-3.500-6-8-6C6 8.500 2 10.500 0 14z" fill="url(#edgeTop)" />
        <path d="M0 14c2-4 6-5.500 10.500-5.500 3 0 5.500 1.200 7 3-7-1-9 3-8.500 7 .8 6 6 10 10.500 10A15 15 0 0 1 0 14z" fill="#0a78d6" />
        <path d="M14 11.500c-4 1-6 4.500-5 8.500 1.500 6 7 9 11 8.800 3-.8 6-3 7.500-6-6 3-14 1-15.500-4.500-.7-2.500.3-5 2-6.800z" fill="#0c4f9e" />
    </svg>
);

const QqLogo = () => (
    <svg width="20" height="21" viewBox="0 0 20 21">
        <ellipse cx="10" cy="13" rx="8" ry="7" fill="#111" />
        <ellipse cx="10" cy="7" rx="6" ry="7" fill="#111" />
        <ellipse cx="10" cy="14.500" rx="5" ry="5" fill="#fff" />
        <ellipse cx="8" cy="5" rx="1.500" ry="2" fill="#fff" />
        <ellipse cx="12" cy="5" rx="1.500" ry="2" fill="#fff" />
        <ellipse cx="10" cy="8.500" rx="3.500" ry="1.200" fill="#f9a61a" />
        <path d="M3 10q7 3.500 14 0v2.500q-6 2-10 1v3H4.500v-4z" fill="#e5302c" />
        <circle cx="15" cy="16.500" r="4.500" fill="#ff9440" />
        <path d="M12.800 16.500h4.400" stroke="#fff" strokeWidth="1.500" />
    </svg>
);

const ChLogo = () => (
    <svg width="20" height="20" viewBox="0 0 20 20">
        <rect width="20" height="20" fill="#00a4ff" />
        <path d="M8 8c-3-1-5.500 1.500-5 4.500.4 2.500 3.500 2.500 5 .5M11.500 3L9 15.500c.5-4 4-6 4-3-.3 2.500 0 3.500 1.500 2.500l2-6" fill="none" stroke="#fff" strokeWidth="1.800" />
    </svg>
);

const dock = [
    { label: "开始", logo: <WindowsLogo />, idle: true },
    { label: "任务视图", logo: <TaskViewLogo />, idle: true },
    { label: "截图工具", logo: <SnipLogo /> },
    { label: "文件资源管理器", logo: <FolderLogo /> },
    { label: "Word", logo: <WordLogo /> },
    { label: "微信", logo: <WeChatLogo /> },
    { label: "Edge", logo: <EdgeLogo />, active: true },
];

const SystemBar = () => (
    <Taskbar>
        <Weather>
            <svg width="24" height="24" viewBox="0 0 24 24">
                <defs>
                    <linearGradient id="sun" x1="0" y1="0" x2="1" y2="1">
                        <stop offset="0" stopColor="#f2c230" />
                        <stop offset="1" stopColor="#f0640a" />
                    </linearGradient>
                </defs>
                <circle cx="12" cy="12" r="12" fill="url(#sun)" />
            </svg>
            <Badge>1</Badge>
            <WeatherText>
                31°C
                <span>晴朗</span>
            </WeatherText>
        </Weather>
        <Dock>
            {dock.map((item) => (
                <DockItem key={item.label} $active={item.active} aria-label={item.label}>
                    {item.logo}
                    <RunMark $active={item.active} $hidden={item.idle} />
                </DockItem>
            ))}
        </Dock>
        <Tray>
            <TrayApps>
                <TrayItem aria-label="显示隐藏的图标"><Icon name="up" size={16} weight={2.8} /></TrayItem>
                <TrayItem aria-label="QQ"><QqLogo /></TrayItem>
                <TrayItem aria-label="微信"><WeChatLogo size={20} /></TrayItem>
                <TrayItem>中</TrayItem>
                <TrayItem $wide aria-label="输入法"><ChLogo /></TrayItem>
            </TrayApps>
            <Icon name="wifi" size={20} weight={1.8} />
            <Icon name="mute" size={20} weight={1.8} />
            <Icon name="battery" size={20} weight={1.8} />
            <Clock>
                10:39
                <br />
                2025-07-04
            </Clock>
            <Icon name="bell" size={20} weight={1.8} />
        </Tray>
    </Taskbar>
);

const App = () => {
    return (
        <Screen>
            <GlobalStyle />
            <Browser />
            <AppFrame>
                <Header />
                <Workspace>
                    <PersonaPanel />
                    <ArrangePanel />
                    <PreviewPanel />
                </Workspace>
            </AppFrame>
            <SystemBar />
            <Watermark>CSDN @夏天又到了</Watermark>
        </Screen>
    );
};

export default App;
